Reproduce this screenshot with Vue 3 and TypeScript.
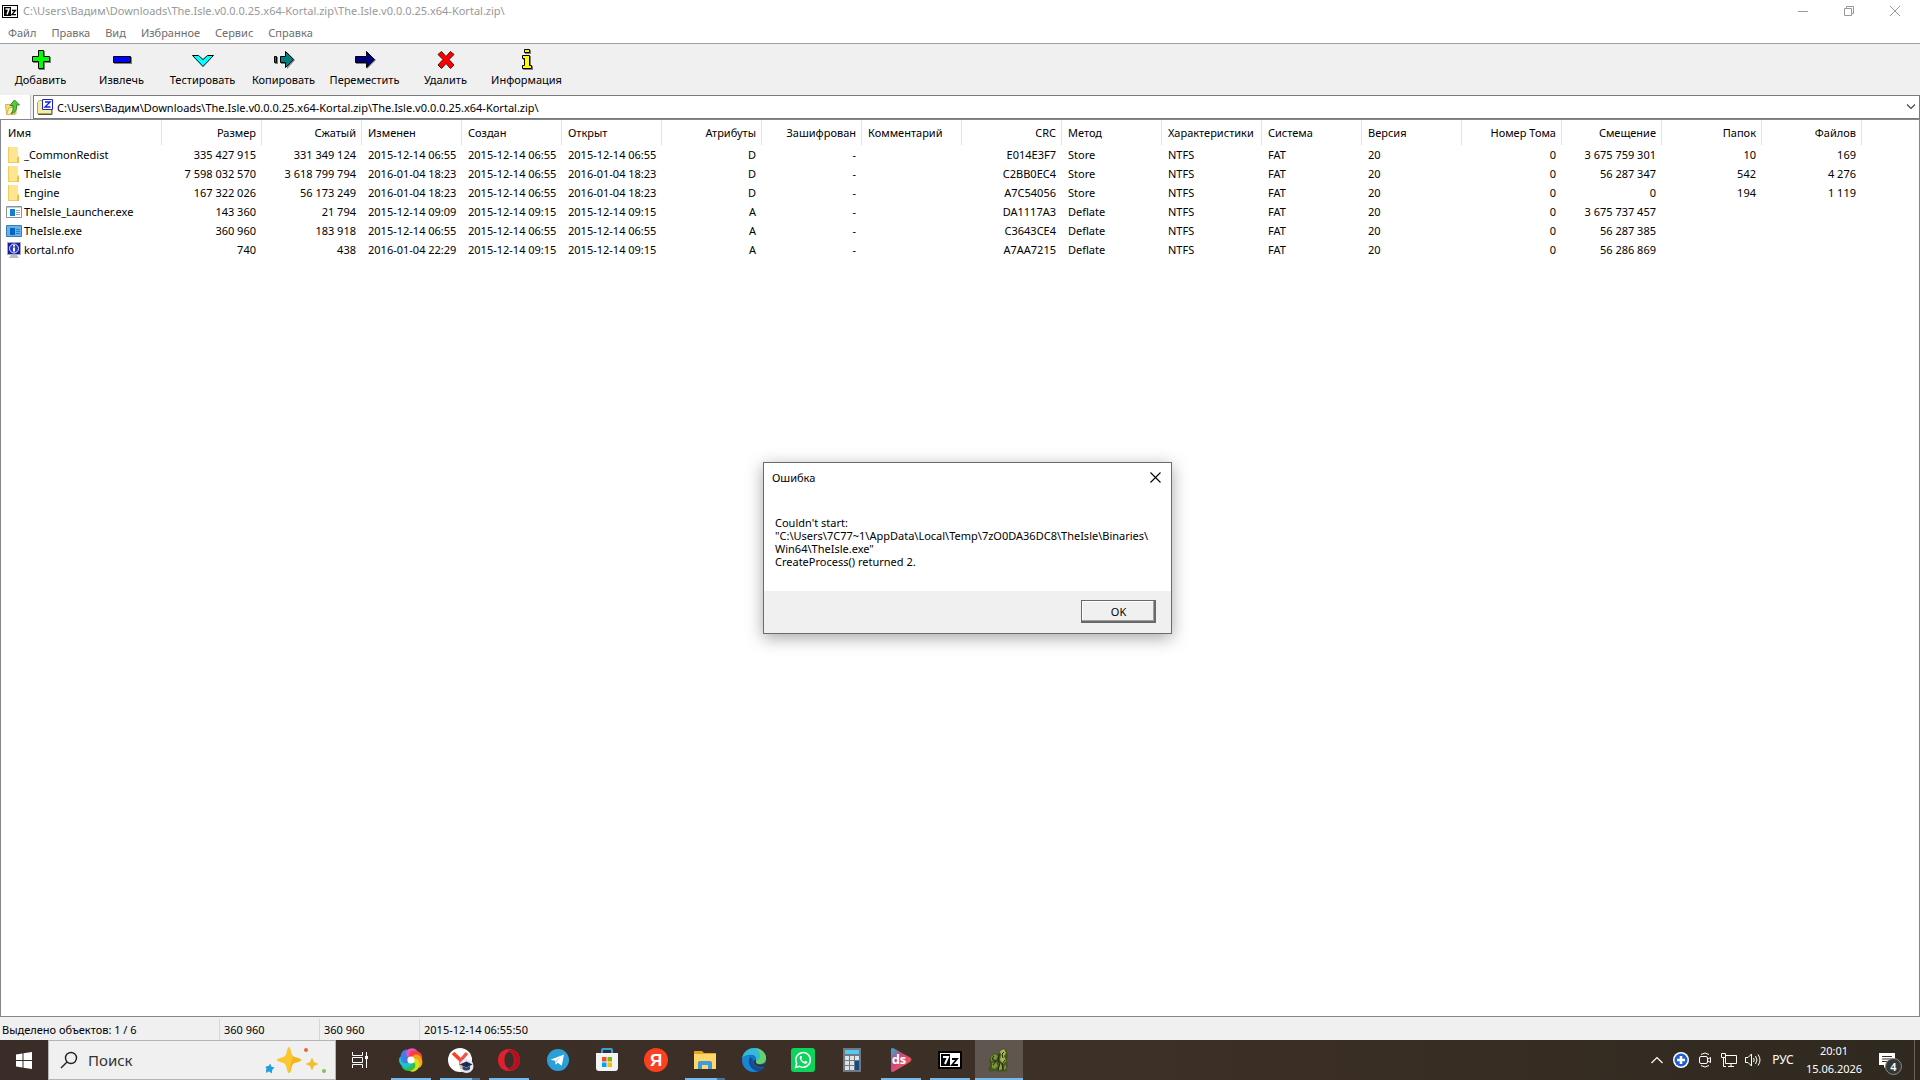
<script setup lang="ts">
import { ref } from 'vue'

interface Column {
  title: string
  right?: boolean
}

interface FileRow {
  icon: 'folder' | 'launcher' | 'exe' | 'nfo'
  name: string
  cells: string[]
}

interface TaskItem {
  id: string
  label: string
  state?: 'open' | 'multi' | 'active'
}

const path = ref('C:\\Users\\Вадим\\Downloads\\The.Isle.v0.0.0.25.x64-Kortal.zip\\The.Isle.v0.0.0.25.x64-Kortal.zip\\')
const dialogOpen = ref(true)

const menu = ['Файл', 'Правка', 'Вид', 'Избранное', 'Сервис', 'Справка']

const tools = [
  { id: 'add', label: 'Добавить' },
  { id: 'extract', label: 'Извлечь' },
  { id: 'test', label: 'Тестировать' },
  { id: 'copy', label: 'Копировать' },
  { id: 'move', label: 'Переместить' },
  { id: 'delete', label: 'Удалить' },
  { id: 'info', label: 'Информация' },
]

const columns: Column[] = [
  { title: 'Размер', right: true },
  { title: 'Сжатый', right: true },
  { title: 'Изменен' },
  { title: 'Создан' },
  { title: 'Открыт' },
  { title: 'Атрибуты', right: true },
  { title: 'Зашифрован', right: true },
  { title: 'Комментарий' },
  { title: 'CRC', right: true },
  { title: 'Метод' },
  { title: 'Характеристики' },
  { title: 'Система' },
  { title: 'Версия' },
  { title: 'Номер Тома', right: true },
  { title: 'Смещение', right: true },
  { title: 'Папок', right: true },
  { title: 'Файлов', right: true },
]

const rows: FileRow[] = [
  { icon: 'folder', name: '_CommonRedist', cells: ['335 427 915', '331 349 124', '2015-12-14 06:55', '2015-12-14 06:55', '2015-12-14 06:55', 'D', '-', '', 'E014E3F7', 'Store', 'NTFS', 'FAT', '20', '0', '3 675 759 301', '10', '169'] },
  { icon: 'folder', name: 'TheIsle', cells: ['7 598 032 570', '3 618 799 794', '2016-01-04 18:23', '2015-12-14 06:55', '2016-01-04 18:23', 'D', '-', '', 'C2BB0EC4', 'Store', 'NTFS', 'FAT', '20', '0', '56 287 347', '542', '4 276'] },
  { icon: 'folder', name: 'Engine', cells: ['167 322 026', '56 173 249', '2016-01-04 18:23', '2015-12-14 06:55', '2016-01-04 18:23', 'D', '-', '', 'A7C54056', 'Store', 'NTFS', 'FAT', '20', '0', '0', '194', '1 119'] },
  { icon: 'launcher', name: 'TheIsle_Launcher.exe', cells: ['143 360', '21 794', '2015-12-14 09:09', '2015-12-14 09:15', '2015-12-14 09:15', 'A', '-', '', 'DA1117A3', 'Deflate', 'NTFS', 'FAT', '20', '0', '3 675 737 457', '', ''] },
  { icon: 'exe', name: 'TheIsle.exe', cells: ['360 960', '183 918', '2015-12-14 06:55', '2015-12-14 06:55', '2015-12-14 06:55', 'A', '-', '', 'C3643CE4', 'Deflate', 'NTFS', 'FAT', '20', '0', '56 287 385', '', ''] },
  { icon: 'nfo', name: 'kortal.nfo', cells: ['740', '438', '2016-01-04 22:29', '2015-12-14 09:15', '2015-12-14 09:15', 'A', '-', '', 'A7AA7215', 'Deflate', 'NTFS', 'FAT', '20', '0', '56 286 869', '', ''] },
]

const tasks: TaskItem[] = [
  { id: 'browser', label: 'Браузер', state: 'open' },
  { id: 'yabrowser', label: 'Yandex Browser', state: 'multi' },
  { id: 'opera', label: 'Opera', state: 'open' },
  { id: 'telegram', label: 'Telegram' },
  { id: 'store', label: 'Microsoft Store' },
  { id: 'yandex', label: 'Яндекс' },
  { id: 'explorer', label: 'Проводник', state: 'multi' },
  { id: 'edge', label: 'Microsoft Edge' },
  { id: 'whatsapp', label: 'WhatsApp' },
  { id: 'calc', label: 'Калькулятор' },
  { id: 'ds', label: 'DS', state: 'open' },
  { id: 'sevenzip', label: '7-Zip', state: 'open' },
  { id: 'isle', label: 'The Isle', state: 'active' },
]

const swirl = ['#e84fd0', '#f5403c', '#f7a11d', '#d6e01c', '#2fc04b', '#21c0d6', '#3f7fe0']
</script>

<template>
  <div class="desktop">
    <main class="window">
      <header class="titlebar">
        <svg class="app-icon" viewBox="0 0 16 13" width="16" height="13" aria-hidden="true">
          <rect width="16" height="13" fill="#000" />
          <path d="M1 1h14v11H1z" fill="#fff" />
          <path d="M2 2h7v9H2z" fill="#000" />
          <path d="M3.500 4H7L5 9.500" fill="none" stroke="#fff" stroke-width="1.500" />
          <path d="M10 5.500h3.500L10 9.700h4" fill="none" stroke="#000" stroke-width="1.300" />
        </svg>
        <h1>{{ path }}</h1>
        <div class="controls">
          <button type="button" aria-label="Свернуть">
            <svg viewBox="0 0 10 10" width="10" height="10"><path d="M0 5.500h10" /></svg>
          </button>
          <button type="button" aria-label="Восстановить">
            <svg viewBox="0 0 10 10" width="10" height="10"><path d="M.5 2.500h7v7h-7zM2.500 2.500v-2h7v7h-2" /></svg>
          </button>
          <button type="button" aria-label="Закрыть">
            <svg viewBox="0 0 10 10" width="10" height="10"><path d="M0 0l10 10M10 0L0 10" /></svg>
          </button>
        </div>
      </header>

      <nav class="menu">
        <button v-for="item in menu" :key="item" type="button">{{ item }}</button>
      </nav>

      <div class="toolbar" role="toolbar">
        <button v-for="tool in tools" :key="tool.id" type="button">
          <svg viewBox="0 0 24 24" width="24" height="24" aria-hidden="true">
            <template v-if="tool.id === 'add'">
              <path d="M10 3h6v6h6v6h-6v7h-6v-7H4V9h6z" fill="#808080" />
              <path d="M9.500 2.500h5v6h6v5h-6v7h-5v-7h-6v-5h6z" fill="#0f0" stroke="#000" />
            </template>
            <template v-else-if="tool.id === 'extract'">
              <path d="M4 9h18v7H4z" fill="#808080" />
              <path d="M3.500 8.500h17v6h-17z" fill="#00f" stroke="#000" />
            </template>
            <template v-else-if="tool.id === 'test'">
              <path d="M1.500 7.500h6l4.500 4 4.500-4h6L12 18.500z" fill="#0ff" stroke="#000" />
            </template>
            <template v-else-if="tool.id === 'copy'">
              <path d="M3 9h3v7H3zM9 9h6V4l8 8-8 9v-5H9z" fill="#808080" />
              <path d="M2.500 8.500h2v6h-2zM8.500 8.500h5v-5l8 8-8 8v-5h-5z" fill="#008080" stroke="#000" />
            </template>
            <template v-else-if="tool.id === 'move'">
              <path d="M3 9h11V5l9 7-9 9v-5H3z" fill="#808080" />
              <path d="M2.500 8.500h11v-5l8 8-8 8v-5h-11z" fill="#000080" stroke="#000" />
            </template>
            <template v-else-if="tool.id === 'delete'">
              <path d="M7.500 3.500l4.500 5 4.500-5 3.500 3-5 5 5 5.500-3.500 3.500-4.500-5-4.500 5L4 17l5-5.500-5-5z" fill="#f00" stroke="#501010" />
            </template>
            <template v-else>
              <path d="M10 2h6v4h-6zM8 8h8v10h2v4H8v-4h2v-6H8z" fill="#808080" />
              <path d="M9.500 1.500h5v3h-5zM7.500 7.500h7v10h2v3h-9v-3h2v-7h-2z" fill="#ff0" stroke="#000" />
            </template>
          </svg>
          <span>{{ tool.label }}</span>
        </button>
      </div>

      <div class="address">
        <button class="up" type="button" aria-label="На уровень вверх">
          <svg viewBox="0 0 16 16" width="16" height="16">
            <path d="M.5 5.500h4l1.500 1.500h5v8H1.500z" fill="#f3df84" stroke="#d3b551" />
            <path d="M1.500 15.500l2.500-7h7l-2 7z" fill="#fbeea9" stroke="#d3b551" />
            <path d="M6 14.500c2-1.500 2.500-4.500 2-8H5L9.500 1l5 5h-3c.5 4.500-1 8-5.500 8.500z" fill="#5cc740" stroke="#2a8a1c" />
          </svg>
        </button>
        <div class="combo">
          <svg viewBox="0 0 18 16" width="18" height="16" aria-hidden="true">
            <path d="M1.500 3.500l2-2h4l2 2h6v11h-14z" fill="#f8ef9e" stroke="#b3a65c" />
            <path d="M2 15.500h14V11" fill="none" stroke="#555" />
            <path d="M6.500.5h10v10h-10z" fill="#fff" stroke="#1a22d8" />
            <path d="M9 3h5l-5 5h5.500" fill="none" stroke="#1a22d8" stroke-width="1.400" />
          </svg>
          <input v-model="path" type="text" aria-label="Адрес" spellcheck="false" />
          <button type="button" aria-label="Показать список">
            <svg viewBox="0 0 10 6" width="10" height="6"><path d="M1 .5l4 4 4-4" fill="none" stroke="#444" stroke-width="1.200" /></svg>
          </button>
        </div>
      </div>

      <section class="files">
        <table>
          <colgroup>
            <col class="col-name" />
            <col v-for="c in columns" :key="c.title" class="col" />
            <col />
          </colgroup>
          <thead>
            <tr>
              <th scope="col" class="first">Имя</th>
              <th v-for="c in columns" :key="c.title" scope="col" :class="{ right: c.right }">{{ c.title }}</th>
              <td></td>
            </tr>
          </thead>
          <tbody>
            <tr v-for="row in rows" :key="row.name">
              <td class="name">
                <div>
                  <svg viewBox="0 0 16 16" width="16" height="16" aria-hidden="true">
                    <template v-if="row.icon === 'folder'">
                      <path d="M2 0h10v9l1 1v6H2z" fill="#ffe592" />
                      <path d="M2 0h1v16H2zM2 15h11v1H2z" fill="#efcb62" />
                      <path d="M11 11l2-2v7h-2z" fill="#e9c04e" />
                    </template>
                    <template v-else-if="row.icon === 'launcher'">
                      <path d="M.5 2.500h15v11H.5z" fill="#fff" stroke="#8b9299" />
                      <path d="M1 3h14v1H1z" fill="#c5cbd0" />
                      <path d="M4 5h5v7H4z" fill="#0f7fd4" />
                      <path d="M10 6.500h4M10 8.500h4M10 10.500h4" stroke="#9aa5ad" />
                    </template>
                    <template v-else-if="row.icon === 'exe'">
                      <path d="M.5 2.500h15v11H.5z" fill="#68b1ea" stroke="#3b7fb8" />
                      <path d="M4 5h5v7H4z" fill="#0567be" />
                      <path d="M10 6.500h4M10 8.500h4M10 10.500h4" stroke="#3180c0" />
                    </template>
                    <template v-else>
                      <path d="M1.500.5h13v12h-13z" fill="#16209a" stroke="#a5a8b8" />
                      <path d="M5 13h6l2 3H3z" fill="#b9bcc4" />
                      <circle cx="8" cy="6.500" r="4.500" fill="#2d3cc4" stroke="#dfe4ff" />
                      <path d="M8 3v1.500M8 5.500v4" stroke="#fff" stroke-width="2" />
                    </template>
                  </svg>
                  <span>{{ row.name }}</span>
                </div>
              </td>
              <td v-for="(cell, i) in row.cells" :key="i" :class="{ right: columns[i].right }">{{ cell }}</td>
              <td></td>
            </tr>
          </tbody>
        </table>
      </section>

      <footer class="status">
        <span class="wide">Выделено объектов: 1 / 6</span>
        <span>360 960</span>
        <span>360 960</span>
        <span class="rest">2015-12-14 06:55:50</span>
      </footer>

      <div v-if="dialogOpen" class="dialog" role="dialog" aria-labelledby="dialog-title">
        <div class="dialog-head">
          <h2 id="dialog-title">Ошибка</h2>
          <button type="button" aria-label="Закрыть" @click="dialogOpen = false">
            <svg viewBox="0 0 11 11" width="11" height="11"><path d="M.5.5l10 10M10.500.5l-10 10" stroke="#000" stroke-width="1.100" /></svg>
          </button>
        </div>
        <p>Couldn't start:<br />"C:\Users\7C77~1\AppData\Local\Temp\7zO0DA36DC8\TheIsle\Binaries\<br />Win64\TheIsle.exe"<br />CreateProcess() returned 2.</p>
        <div class="dialog-foot">
          <button type="button" @click="dialogOpen = false">OK</button>
        </div>
      </div>
    </main>

    <div class="taskbar">
      <button class="slot start" type="button" aria-label="Пуск">
        <svg viewBox="0 0 16 17" width="16" height="17"><path d="M0 2.500l6.500-1V8H0zM7.500 1.300L16 0v8H7.500zM0 9h6.500v6.500l-6.500-1zM7.500 9H16v8l-8.500-1.300z" fill="#fff" /></svg>
      </button>
      <label class="search">
        <svg viewBox="0 0 18 18" width="18" height="18" aria-hidden="true">
          <circle cx="11" cy="7" r="5.500" fill="none" stroke="#222" stroke-width="1.400" />
          <path d="M7 11l-6 6" stroke="#222" stroke-width="1.400" />
        </svg>
        <input type="search" placeholder="Поиск" aria-label="Поиск" />
        <svg viewBox="0 0 62 28" width="62" height="28" aria-hidden="true">
          <path d="M24 1c2 0 2 7 4 9s8 2 8 4-6 2-8 4-2 9-4 9-2-7-4-9-8-2-8-4 6-2 8-4 2-9 4-9z" fill="#fbc62f" />
          <path d="M28 10c2 2 8 2 8 4s-6 2-8 4-2 9-4 9z" fill="#f3b41d" />
          <path d="M47 12c1 0 1 3 2 4s4 1 4 2-3 1-4 2-1 4-2 4-1-3-2-4-4-1-4-2 3-1 4-2 1-4 2-4z" fill="#f6bd2b" />
          <path d="M5 18c1 0 1 3 2 3s3 0 2 1-2 2-2 3 0 3-1 2-2-2-3-1-2 1-2-1 1-2 0-3 0-2 2-2 1-2 2-2z" fill="#1f9fe0" />
          <circle cx="41" cy="4" r="2" fill="#e8663c" />
          <circle cx="59" cy="25" r="2" fill="#88c152" />
        </svg>
      </label>
      <button class="slot taskview" type="button" aria-label="Представление задач">
        <svg viewBox="0 0 18 18" width="18" height="18" fill="none" stroke="#fff">
          <path d="M1.500 1v3.500h10V1M1.500 17v-3.500h10V17M1.500 6.500h10v5h-10zM15.500 1v16" />
          <path d="M14 5h3v3h-3z" fill="#fff" stroke="none" />
        </svg>
      </button>

      <button v-for="t in tasks" :key="t.id" type="button" class="slot" :class="t.state" :aria-label="t.label">
        <svg viewBox="0 0 24 24" width="24" height="24">
          <template v-if="t.id === 'browser'">
            <path
              v-for="(color, i) in swirl"
              :key="color"
              d="M12 12C5 10 6 2 13 1c4-.5 7 1 8 4.500-3-1-7 0-9 6.500z"
              :fill="color"
              :transform="`rotate(${i * 51 - 20} 12 12)`"
            />
            <circle cx="12" cy="12" r="3.600" fill="#fff" />
          </template>
          <template v-else-if="t.id === 'yabrowser'">
            <circle cx="12" cy="12" r="12" fill="#fff" />
            <path d="M5 5l8 7.500" stroke="#fc3f1d" stroke-width="3.600" />
            <path d="M19 5l-6 7v6" fill="none" stroke="#f2544c" stroke-width="3.400" />
            <circle cx="18.500" cy="18" r="7" fill="#e6eaf2" />
            <path d="M11.500 16.500l7-3 6 3-6 3z" fill="#1d2b4d" />
            <path d="M14.500 18v3c2 2 5.500 2 7.500 0v-3l-3.500 1.800z" fill="#33446e" />
            <path d="M13 17v4" stroke="#e8a325" />
          </template>
          <template v-else-if="t.id === 'opera'">
            <path fill-rule="evenodd" d="M12 1c7 0 11 5 11 11s-4 11-11 11S1 18 1 12 5 1 12 1zm0 3c-3 0-4.500 4-4.500 8s1.500 8 4.500 8 5-4 5-8-2-8-5-8z" fill="#e0202f" />
            <path d="M14 1.500c5.500 1 9 5.500 9 10.500s-3.500 9.500-9 10.500c-1.500 0-3-1-3.500-2.500 5 1 7-4 7-8s-2-9-7-8c.5-1.500 2-2.500 3.500-2.500z" fill="#b01220" />
          </template>
          <template v-else-if="t.id === 'telegram'">
            <circle cx="12" cy="12" r="11" fill="#2a9fd8" />
            <path d="M4.500 11.800L18 6.500l-2.300 11.300-4-3-2 2-.5-4z" fill="#fff" />
            <path d="M9.200 12.800l6.300-4.300-4.800 5-1 3.300z" fill="#b7d9ec" />
          </template>
          <template v-else-if="t.id === 'store'">
            <path d="M7 6V2q0-1 1-1h8q1 0 1 1v4" fill="none" stroke="#33a3dc" stroke-width="2" />
            <path d="M1 5h22v15q0 3-3 3H4q-3 0-3-3z" fill="#f3f4f6" />
            <path d="M7 9h4.500v4.500H7z" fill="#f25022" />
            <path d="M12.500 9H17v4.500h-4.500z" fill="#7fba00" />
            <path d="M7 14.500h4.500V19H7z" fill="#00a4ef" />
            <path d="M12.500 14.500H17V19h-4.500z" fill="#ffb900" />
          </template>
          <template v-else-if="t.id === 'yandex'">
            <circle cx="12" cy="12" r="12" fill="#fc3f1d" />
            <text x="12" y="18" class="ya" text-anchor="middle">Я</text>
          </template>
          <template v-else-if="t.id === 'explorer'">
            <path d="M1 3h8l2 2h12v4H1z" fill="#e9a520" />
            <path d="M1 6h22v15H1z" fill="#ffd768" />
            <path d="M5 21v-6q0-2 2-2h10q2 0 2 2v6h-4v-4H9v4z" fill="#3d9be0" />
          </template>
          <template v-else-if="t.id === 'edge'">
            <circle cx="12" cy="12" r="12" fill="#1573c4" />
            <path d="M0 11C1 4 6 0 12 0c7 0 12 5 12 10 0 4-3 6-6 6-4 0-5-2-4-4 1-3-2-6-6-5-4 0-7 2-8 4z" fill="#36b9d8" />
            <path d="M14 .3C20 1 24 5.500 24 10c0 4-3 6-6 6-3 0-4.500-1-4-3 6-1 5-9 0-12.700z" fill="#63d36b" />
            <path d="M8 9c-3 5 0 13 8 14.300C5 26-2 17 1 9c2-2 5-2 7 0z" fill="#1a86d0" />
            <path d="M8 9c-3 5 0 13 8 14.300 3-.5 5-2 6.500-4.300-6 2-12-1-12-8z" fill="#0f4f98" />
            <path d="M14 12c-1 3 1 5 5 4.500 2 0 4-1 5-2.500l-1.500 4.500c-6 1.500-11-1-11-6z" fill="#3b2e27" />
          </template>
          <template v-else-if="t.id === 'whatsapp'">
            <rect width="24" height="24" rx="3" fill="#0bd35c" />
            <path d="M4.500 19.500l1.200-4a7.300 7.300 0 1 1 2.800 2.800z" fill="none" stroke="#fff" stroke-width="1.500" />
            <path d="M9 8c-1.500 3.500 3 8.500 6.500 7.500 1.300-.8 1-1.800.5-2l-1.700-.8-1 1c-1.500-.5-2.500-1.500-3-3l.9-1L10.500 8z" fill="#fff" />
          </template>
          <template v-else-if="t.id === 'calc'">
            <path d="M3 0h18v24H3z" fill="#6f7983" />
            <path d="M5 2h14v4H5z" fill="#59c7f2" />
            <path d="M5 8h4v4H5zM10 8h4v4h-4zM15 8h4v4h-4zM5 13h4v4H5zM10 13h4v4h-4zM5 18h4v4H5zM10 18h4v4h-4z" fill="#dfe3e6" />
            <path d="M15 13h4v9h-4z" fill="#184a86" />
          </template>
          <template v-else-if="t.id === 'ds'">
            <defs>
              <linearGradient id="ds-fill" x1="0" y1="0" x2="1" y2="1">
                <stop offset="0" stop-color="#22b8d6" />
                <stop offset=".35" stop-color="#c04b8c" />
                <stop offset=".7" stop-color="#f0525a" />
                <stop offset="1" stop-color="#7a35c8" />
              </linearGradient>
            </defs>
            <path d="M2 2q0-3 3-1.500l16 9q3 2 0 4.500L5 23.500Q2 25 2 22z" fill="url(#ds-fill)" />
            <text x="10" y="16" class="ds" text-anchor="middle">ds</text>
          </template>
          <template v-else-if="t.id === 'sevenzip'">
            <path d="M0 3h24v18H0z" fill="#000" />
            <path d="M2 5h20v14H2z" fill="#fff" />
            <path d="M3 6h9v12H3z" fill="#000" />
            <path d="M5 9h5l-3 7" fill="none" stroke="#fff" stroke-width="2" />
            <path d="M14 11h5l-5 6h6" fill="none" stroke="#000" stroke-width="1.800" />
          </template>
          <template v-else>
            <path d="M1 21l2-4-1-4 2-5 4-3 4 1 1-4 4-2 3 3 1 5-1 5 1 5-2 3 2 2-7 1-7-1-4 1z" fill="#46551f" />
            <path d="M13 3l4-2 2 4-2 3 2 5-3 3-3-4 1-5z" fill="#a9b64c" />
            <path d="M4 9l4-3 3 2-2 4-5 1zM5 15l4-1 2 4-3 3-3-1z" fill="#7c9138" />
            <path d="M12 14l3 3 1 4-4 1zM18 16l1 4-2 2z" fill="#93a348" />
            <path d="M12 6l-1 6 2 3-2 7M17 4l-2 2 1 4M7 8l-2 3 4 2-3 4M18 12l-3 4 1 6" fill="none" stroke="#1c2410" />
          </template>
        </svg>
      </button>

      <div class="tray">
        <button type="button" aria-label="Показать скрытые значки">
          <svg viewBox="0 0 16 16" width="16" height="16"><path d="M2.500 11L8 5.500l5.500 5.500" fill="none" stroke="#fff" stroke-width="1.200" /></svg>
        </button>
        <button type="button" aria-label="Помощник">
          <svg viewBox="0 0 16 16" width="16" height="16">
            <circle cx="8" cy="8" r="8" fill="#fff" />
            <circle cx="8" cy="8" r="6.500" fill="#1d5fd0" />
            <path d="M8 4v8M4 8h8" stroke="#fff" stroke-width="2.600" />
          </svg>
        </button>
        <button type="button" aria-label="Камера">
          <svg viewBox="0 0 16 16" width="16" height="16" fill="none" stroke="#fff">
            <path d="M4 2.500q4-3 8 0M4 13.500q4 3 8 0M11 7l2.500-1.500v5L11 9" />
            <rect x="2.500" y="4.500" width="8" height="7" rx="1.500" />
          </svg>
        </button>
        <button type="button" aria-label="Сеть">
          <svg viewBox="0 0 16 16" width="16" height="16" fill="none" stroke="#fff">
            <path d="M5 3.500h10.500v8H4.500V6M7 14.500h6M10 12v2M.5 1.500h4v4h-4zM2.500 6v8.500H5" />
          </svg>
        </button>
        <button type="button" aria-label="Громкость">
          <svg viewBox="0 0 16 16" width="16" height="16" fill="none" stroke="#fff">
            <path d="M.5 5.500H3L6.500 2v12L3 10.500H.5zM8.500 6q1.500 2 0 4M10.500 4q3 4 0 8M13 2.500q4 5.500 0 11" />
          </svg>
        </button>
        <button class="lang" type="button">РУС</button>
        <button class="clock" type="button"><span>20:01</span><span>15.06.2026</span></button>
        <button class="notes" type="button" aria-label="Уведомления: 4">
          <svg viewBox="0 0 16 16" width="16" height="16">
            <path d="M0 1h16v12H8l-3 3v-3H0z" fill="#fff" />
            <path d="M3 4.500h10M3 7h10M3 9.500h6" stroke="#3b2e27" />
          </svg>
          <span class="badge">4</span>
        </button>
      </div>
    </div>
  </div>
</template>

<style>
html,
body,
#app {
  height: 100%;
}
</style>

<style scoped>
.desktop {
  display: flex;
  flex-direction: column;
  height: 100%;
  overflow: hidden;
  font-family: "Noto Sans", "Open Sans", sans-serif;
  font-size: 11px;
  line-height: 16px;
  color: #000;
}

button {
  padding: 0;
  border: 0;
  background: none;
  font: inherit;
  color: inherit;
}

svg {
  display: block;
  flex: none;
}

h1,
h2,
p {
  margin: 0;
  font: inherit;
}

.window {
  position: relative;
  flex: 1;
  display: flex;
  flex-direction: column;
  min-height: 0;
  background: #fff;
}

.titlebar {
  display: flex;
  align-items: center;
  height: 22px;
  padding: 0 2px;
}

.titlebar h1 {
  flex: 1;
  margin-left: 5px;
  color: #999;
}

.controls {
  display: flex;
}

.controls button {
  display: flex;
  align-items: center;
  justify-content: center;
  width: 46px;
  height: 22px;
}

.controls path {
  fill: none;
  stroke: #999;
}

.menu {
  display: flex;
  gap: 15px;
  height: 21px;
  padding-left: 8px;
  border-bottom: 1px solid #a0a0a0;
  color: #6d6d6d;
}

.toolbar {
  display: flex;
  height: 51px;
  background: #f0f0f0;
}

.toolbar button {
  display: flex;
  flex-direction: column;
  align-items: center;
  width: 81px;
  padding-top: 4px;
  white-space: nowrap;
}

.address {
  display: flex;
  background: #f0f0f0;
}

.up {
  display: flex;
  align-items: center;
  width: 31px;
  padding-left: 5px;
  background: #fff;
  border-right: 1px solid #c8c8c8;
}

.combo {
  flex: 1;
  display: flex;
  align-items: center;
  height: 22px;
  margin-left: 2px;
  padding-left: 2px;
  border: 1px solid #7a7a7a;
  background: #fff;
}

.combo input {
  flex: 1;
  margin-left: 3px;
  padding: 2px 0 0;
  border: 0;
  outline: 0;
  background: none;
  font: inherit;
}

.combo button {
  padding: 0 3px;
}

.files {
  flex: 1;
  min-height: 0;
  border: 1px solid #828790;
  overflow: hidden;
}

table {
  width: 100%;
  table-layout: fixed;
  border-collapse: separate;
  border-spacing: 0;
}

.col-name {
  width: 161px;
}

.col {
  width: 100px;
}

th,
td {
  box-sizing: border-box;
  height: 19px;
  padding: 0 5px 0 6px;
  text-align: left;
  font-weight: 400;
  white-space: nowrap;
}

th {
  height: 25px;
  border-right: 1px solid #e2e2e2;
}

.first {
  padding-left: 7px;
}

td.right {
  padding-right: 6px;
}

.right {
  text-align: right;
}

.name {
  padding-left: 5px;
}

.name div {
  display: flex;
  align-items: center;
  gap: 2px;
}

.status {
  display: flex;
  align-items: flex-end;
  height: 23px;
  background: #f0f0f0;
}

.status span {
  box-sizing: border-box;
  width: 100px;
  height: 21px;
  padding-left: 4px;
  border-right: 1px solid #d7d7d7;
  line-height: 21px;
}

.status .wide {
  width: 220px;
  padding-left: 2px;
}

.status .rest {
  flex: 1;
  border-right: 0;
}

.dialog {
  position: absolute;
  top: 462px;
  left: 763px;
  width: 407px;
  border: 1px solid #6b6b6b;
  background: #fff;
  box-shadow: 0 4px 16px rgba(0, 0, 0, 0.35);
}

.dialog-head {
  display: flex;
  justify-content: space-between;
  align-items: center;
  height: 29px;
  padding: 0 10px 0 8px;
}

.dialog p {
  padding: 24px 11px 23px;
  line-height: 13px;
}

.dialog-foot {
  display: flex;
  justify-content: flex-end;
  padding: 9px 15px 10px;
  background: #f0f0f0;
}

.dialog-foot button {
  width: 75px;
  height: 23px;
  border: 1px solid #696969;
  box-shadow: inset -1px -1px #696969, inset -2px -2px #a0a0a0, inset 1px 1px #fff;
}

.taskbar {
  display: flex;
  height: 40px;
  background: linear-gradient(90deg, #3a2d28, #3d3026 60%, #2f2920);
  color: #fff;
}

.slot {
  display: flex;
  align-items: center;
  justify-content: center;
  box-sizing: border-box;
  width: 48px;
  margin-right: 1px;
}

.slot svg {
  overflow: visible;
}

.start {
  margin-right: 0;
}

.taskview {
  margin-right: 3px;
}

.open,
.multi {
  background: linear-gradient(#76b9ed, #76b9ed) 4px 38px / 40px 2px no-repeat;
}

.multi {
  background: linear-gradient(90deg, #76b9ed 32px, #4a7396 32px) 4px 38px / 40px 2px no-repeat;
}

.active {
  background: linear-gradient(#76b9ed, #76b9ed) 0 38px / 48px 2px no-repeat, #605650;
}

.ya {
  font: 700 17px "Liberation Sans", sans-serif;
  fill: #fff;
}

.ds {
  font: 700 13px "Open Sans", sans-serif;
  fill: #fff;
}

.search {
  display: flex;
  align-items: center;
  box-sizing: border-box;
  width: 288px;
  padding: 0 8px 0 11px;
  border: 1px solid #b5b5b5;
  background: #f0f0f0;
}

.search input {
  flex: 1;
  min-width: 0;
  margin-left: 10px;
  padding: 0;
  border: 0;
  outline: 0;
  background: none;
  font: inherit;
  font-size: 15px;
}

.search input::placeholder {
  color: #333;
}

.tray {
  display: flex;
  align-items: center;
  margin-left: auto;
}

.tray button {
  display: flex;
  align-items: center;
  justify-content: center;
  width: 24px;
  height: 40px;
}

.tray .lang {
  width: 36px;
  font-size: 12px;
}

.tray .clock {
  flex-direction: column;
  width: 66px;
  font-size: 11px;
  line-height: 18px;
}

.tray .notes {
  position: relative;
  width: 48px;
  padding-right: 7px;
  margin-right: 5px;
  border-right: 1px solid #6b645c;
}

.badge {
  position: absolute;
  top: 18px;
  left: 18px;
  width: 15px;
  height: 15px;
  border: 1px solid #8a8a8a;
  border-radius: 50%;
  background: #363636;
  font-weight: 600;
  line-height: 15px;
  text-align: center;
}
</style>
